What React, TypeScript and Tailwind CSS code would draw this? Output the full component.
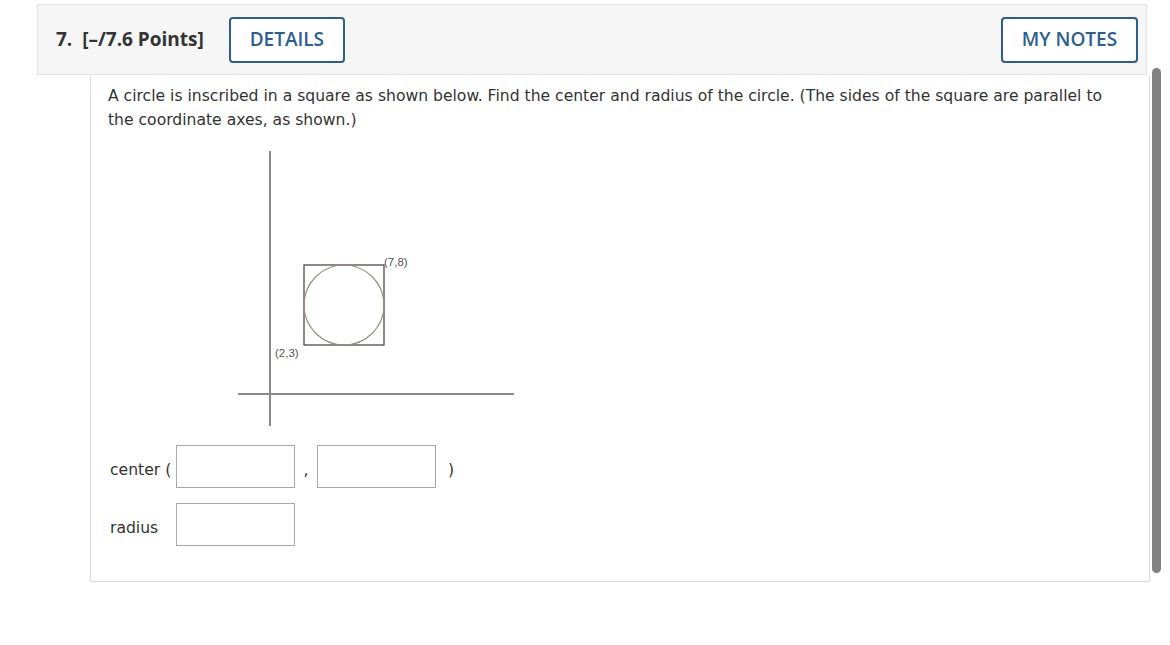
import React from 'react'

function Figure() {
  return (
    <svg width="290" height="290" viewBox="0 0 290 290" className="block">
      {/* axes */}
      <line x1="40" y1="10" x2="40" y2="285" stroke="#8a8a8a" strokeWidth="2" />
      <line x1="8" y1="253" x2="284" y2="253" stroke="#8a8a8a" strokeWidth="2" />
      {/* square + circle */}
      <rect x="74" y="124" width="80" height="80" fill="none" stroke="#3d3d3d" strokeWidth="1.2" />
      <circle cx="114" cy="164" r="40" fill="none" stroke="#9b8a86" strokeWidth="1.2" />
      <text x="154" y="125" fontSize="11.5" fill="#555" fontFamily="Liberation Sans, Arial, sans-serif">(7,8)</text>
      <text x="45" y="216" fontSize="11.5" fill="#555" fontFamily="Liberation Sans, Arial, sans-serif">(2,3)</text>
    </svg>
  )
}

export default function App() {
  return (
    <div className="w-[1170px] h-[645px] bg-white relative overflow-hidden">
      <div className="pt-[4px] pl-[37px] pr-[23px]">
        {/* header */}
        <div className="h-[71px] bg-[#f6f6f6] border border-[#e4e4e4] flex items-center pl-[18px] pr-[8px] font-[family-name:'Open_Sans',sans-serif]">
          <span className="text-[19px] font-bold text-[#333]">7.&nbsp; [–/7.6 Points]</span>
          <button className="ml-[25px] h-[46px] w-[116px] border-2 border-[#2c5f8e] rounded-[4px] bg-white text-[#2c5f8e] text-[19px] font-semibold">
            DETAILS
          </button>
          <button className="ml-auto h-[46px] w-[137px] border-2 border-[#2c5f8e] rounded-[4px] bg-white text-[#2c5f8e] text-[19px] font-semibold">
            MY NOTES
          </button>
        </div>

        {/* question body */}
        <div className="ml-[53px] mr-[-3px] border-l border-r border-b border-[#dcdcdc] h-[507px] pl-[17px] pr-[30px] pt-[9px] font-[family-name:'DejaVu_Sans',Verdana,sans-serif] text-[#333] text-[15.6px]">
          <p className="leading-[24px]">
            A circle is inscribed in a square as shown below. Find the center and radius of the circle. (The sides of the square are parallel to the coordinate axes, as shown.)
          </p>
          <div className="ml-[122px] mt-[9px]">
            <Figure />
          </div>
          <div className="mt-[14px] flex items-center">
            <span className="w-[66px] ml-[2px] pt-[8px]">center (</span>
            <div className="w-[119px] h-[43px] border border-[#a8a8a8] bg-white" />
            <span className="w-[22px] text-center pt-[8px]">,</span>
            <div className="w-[119px] h-[43px] border border-[#a8a8a8] bg-white" />
            <span className="ml-[12px] pt-[8px]">)</span>
          </div>
          <div className="mt-[15px] flex items-center">
            <span className="w-[66px] ml-[2px] pt-[8px]">radius</span>
            <div className="w-[119px] h-[43px] border border-[#a8a8a8] bg-white" />
          </div>
        </div>
      </div>

      {/* scrollbar */}
      <div className="absolute left-[1152px] top-[68px] w-[9px] h-[505px] rounded-full bg-[#818181]" />
    </div>
  )
}
